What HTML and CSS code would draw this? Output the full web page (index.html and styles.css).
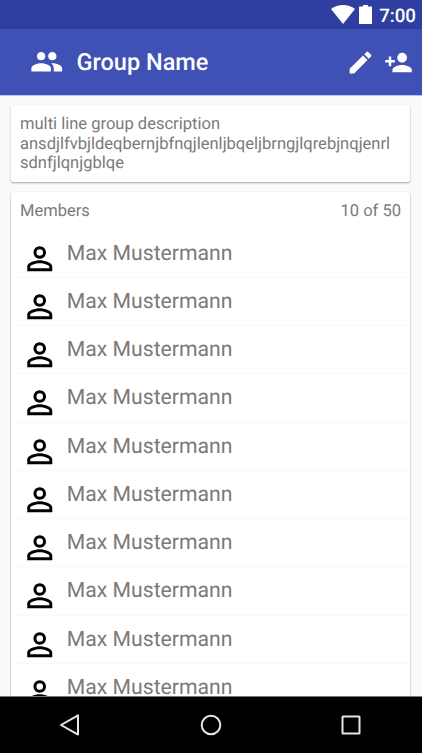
FILE: index.html
```
<!DOCTYPE html>
<html lang="en">
<head>
<meta charset="utf-8">
<title>Group Name</title>
<link rel="stylesheet" href="styles.css">
</head>
<body>
<svg class="defs" width="0" height="0">
  <symbol id="person" viewBox="0 0 24 24"><path d="M12 5.9a2.1 2.1 0 1 1 0 4.2 2.1 2.1 0 0 1 0-4.2m0 9c2.97 0 6.1 1.46 6.1 2.1v1.1H5.9V17c0-.64 3.13-2.1 6.1-2.1M12 4C9.79 4 8 5.79 8 8s1.79 4 4 4 4-1.79 4-4-1.79-4-4-4zm0 9c-2.67 0-8 1.34-8 4v3h16v-3c0-2.66-5.33-4-8-4z"/></symbol>
</svg>
<div class="status">
  <svg class="wifi" viewBox="0 0 24 19"><path d="M0 4C7-1.300 17-1.300 24 4L12 19z"/></svg>
  <svg class="battery" viewBox="0 0 13 19"><path d="M4 0h5v1.500h3.500q.5 0 .5.500v16.500q0 .5-.5.500H.5q-.5 0-.5-.5V2q0-.5.5-.5H4z"/></svg>
  <span class="clock">7:00</span>
</div>
<header class="toolbar">
  <svg class="people" viewBox="0 0 24 24"><path d="M16 11c1.660 0 2.990-1.340 2.990-3S17.660 5 16 5s-3 1.340-3 3 1.340 3 3 3zm-8 0c1.660 0 2.990-1.340 2.990-3S9.660 5 8 5 5 6.340 5 8s1.340 3 3 3zm0 2c-2.330 0-7 1.170-7 3.500V19h14v-2.500c0-2.330-4.670-3.500-7-3.500zm8 0c-.29 0-.62.02-.97.05 1.160.84 1.970 1.970 1.970 3.450V19h6v-2.500c0-2.330-4.670-3.500-7-3.500z"/></svg>
  <h1>Group Name</h1>
  <svg class="action" viewBox="0 0 24 24"><path d="M3 17.250V21h3.750L17.810 9.940l-3.750-3.750L3 17.250zM20.710 7.040a1 1 0 0 0 0-1.410l-2.340-2.340a1 1 0 0 0-1.410 0l-1.830 1.830 3.750 3.750 1.830-1.830z"/></svg>
  <svg class="action add" viewBox="0 0 24 24"><path d="M15 12c2.210 0 4-1.790 4-4s-1.790-4-4-4-4 1.790-4 4 1.790 4 4 4zm-9-2V7H4v3H1v2h3v3h2v-3h3v-2H6zm9 4c-2.670 0-8 1.340-8 4v2h16v-2c0-2.660-5.330-4-8-4z"/></svg>
</header>
<main>
  <section class="card description">multi line group description<br>ansdjlfvbjldeqbernjbfnqjlenljbqeljbrngjlqrebjnqjenrl<br>sdnfjlqnjgblqe</section>
  <section class="card members">
    <div class="head"><span>Members</span><span>10 of 50</span></div>
    <ul>
      <li><svg><use href="#person"/></svg><span>Max Mustermann</span></li>
      <li><svg><use href="#person"/></svg><span>Max Mustermann</span></li>
      <li><svg><use href="#person"/></svg><span>Max Mustermann</span></li>
      <li><svg><use href="#person"/></svg><span>Max Mustermann</span></li>
      <li><svg><use href="#person"/></svg><span>Max Mustermann</span></li>
      <li><svg><use href="#person"/></svg><span>Max Mustermann</span></li>
      <li><svg><use href="#person"/></svg><span>Max Mustermann</span></li>
      <li><svg><use href="#person"/></svg><span>Max Mustermann</span></li>
      <li><svg><use href="#person"/></svg><span>Max Mustermann</span></li>
      <li><svg><use href="#person"/></svg><span>Max Mustermann</span></li>
    </ul>
  </section>
</main>
<nav>
  <svg viewBox="0 0 24 24"><path d="M20 2.400v19.200L3 12z"/></svg>
  <svg viewBox="0 0 24 24"><circle cx="12" cy="12" r="9.300"/></svg>
  <svg viewBox="0 0 24 24"><rect x="3.500" y="3.500" width="17" height="17" rx=".5"/></svg>
</nav>
</body>
</html>
```
FILE: styles.css
```
* { box-sizing: border-box; }
body {
  margin: 0;
  height: 753px;
  display: flex;
  flex-direction: column;
  overflow: hidden;
  background: #fafafa;
  color: #7a7a7a;
  font-family: Roboto, sans-serif;
  text-rendering: geometricPrecision;
}
svg { display: block; flex: none; }
.defs { position: absolute; }
.status {
  flex: none;
  height: 29px;
  display: flex;
  align-items: flex-start;
  justify-content: flex-end;
  padding: 5px 6px 0 0;
  background: #303f9f;
  color: #fff;
  fill: #fff;
}
.wifi { width: 24px; height: 19px; margin-right: 4px; }
.battery { width: 13px; height: 19px; margin-right: 7px; }
.clock { font-size: 18.700px; line-height: 22px; font-weight: 500; }
.toolbar {
  flex: none;
  height: 67px;
  display: flex;
  align-items: center;
  padding: 0 9px 0 29.500px;
  background: #3f51b5;
  border-bottom: 1px solid #bcc3ea;
  color: #fff;
  fill: #fff;
}
.people { width: 33.500px; height: 33.500px; }
h1 {
  flex: 1;
  margin: 0 0 0 13.500px;
  font-size: 23.500px;
  line-height: 28px;
  font-weight: 500;
}
.action { width: 29px; height: 29px; }
.add { margin-left: 9px; }
main {
  flex: 1;
  min-height: 0;
  overflow: hidden;
  padding: 9px 12px 0 11px;
}
.card {
  background: #fff;
  border-radius: 2px;
  box-shadow: 0 1px 2px rgba(0, 0, 0, .35);
  font-size: 16.550px;
}
.description {
  height: 77px;
  padding: 10px 9px 0;
  line-height: 19.600px;
  white-space: nowrap;
}
.members { margin-top: 10px; height: 560px; box-shadow: 0 1px 2px rgba(0, 0, 0, .45); }
.head {
  height: 37.500px;
  padding: 10px 9px 0;
  display: flex;
  justify-content: space-between;
  line-height: 20px;
}
ul { list-style: none; margin: 0; padding: 0; }
li {
  height: 48.250px;
  display: flex;
  align-items: flex-start;
  padding: 11px 0 0 9.250px;
  margin: 0 1px;
  border-bottom: 1px solid #f9f9f9;
  font-size: 21.200px;
  line-height: 26px;
}
li svg { width: 37.500px; height: 37.500px; margin: -1px 8.500px 0 -.5px; }
nav {
  flex: none;
  height: 57px;
  display: flex;
  justify-content: space-around;
  align-items: center;
  padding-right: .5px;
  background: #000;
  border-top: 1px solid #777;
}
nav svg {
  width: 24px;
  height: 24px;
  fill: none;
  stroke: #e6e6e6;
  stroke-width: 2;
  stroke-linejoin: round;
}
```
